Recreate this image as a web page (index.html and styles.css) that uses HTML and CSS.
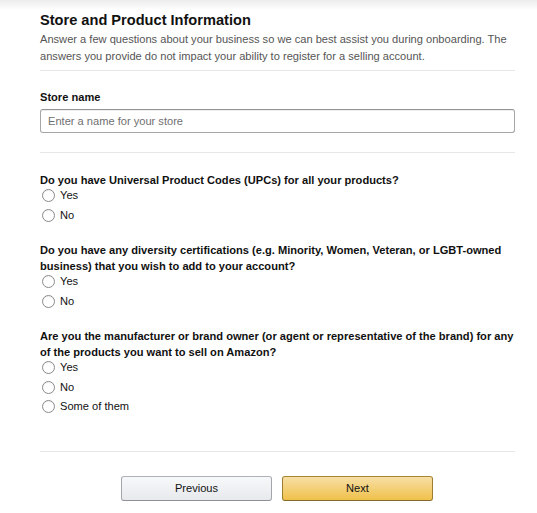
FILE: index.html
```html
<!DOCTYPE html>
<html lang="en">
<head>
<meta charset="utf-8">
<title>Store and Product Information</title>
<link rel="stylesheet" href="styles.css">
</head>
<body>
<div class="page">
  <section class="intro">
    <h1 class="title">Store and Product Information</h1>
    <p class="desc">Answer a few questions about your business so we can best assist you during onboarding. The answers you provide do not impact your ability to register for a selling account.</p>
  </section>
  <section class="store">
    <label class="label" for="store">Store name</label>
    <input id="store" class="input" type="text" placeholder="Enter a name for your store">
  </section>
  <section class="questions">
    <fieldset class="q">
      <legend class="qtext">Do you have Universal Product Codes (UPCs) for all your products?</legend>
      <label class="opt"><span class="radio"></span>Yes</label>
      <label class="opt"><span class="radio"></span>No</label>
    </fieldset>
    <fieldset class="q">
      <legend class="qtext">Do you have any diversity certifications (e.g. Minority, Women, Veteran, or LGBT-owned business) that you wish to add to your account?</legend>
      <label class="opt"><span class="radio"></span>Yes</label>
      <label class="opt"><span class="radio"></span>No</label>
    </fieldset>
    <fieldset class="q">
      <legend class="qtext">Are you the manufacturer or brand owner (or agent or representative of the brand) for any of the products you want to sell on Amazon?</legend>
      <label class="opt"><span class="radio"></span>Yes</label>
      <label class="opt"><span class="radio"></span>No</label>
      <label class="opt"><span class="radio"></span>Some of them</label>
    </fieldset>
  </section>
  <div class="actions">
    <button class="btn btn-prev" type="button">Previous</button>
    <button class="btn btn-next" type="button">Next</button>
  </div>
</div>
</body>
</html>
```
FILE: styles.css
```css
* { box-sizing: border-box; }
html, body { margin: 0; padding: 0; }
body {
  background: linear-gradient(to bottom, #ececec 0px, #ffffff 10px);
  font-family: "Liberation Sans", Arial, sans-serif;
  color: #111;
  width: 537px;
  height: 513px;
  overflow: hidden;
}
.page {
  padding: 9px 22px 0 40px;
}
.intro {
  padding-bottom: 5px;
  border-bottom: 1px solid #e7e7e7;
}
.title {
  margin: 0;
  font-size: 14.6px;
  font-weight: 700;
  line-height: 22px;
  color: #111;
}
.desc {
  margin: 0;
  font-size: 11.1px;
  line-height: 17px;
  color: #555;
}
.store {
  padding: 18px 0 19px;
  border-bottom: 1px solid #e7e7e7;
}
.label {
  display: block;
  font-size: 11.1px;
  font-weight: 700;
  line-height: 16px;
  margin-bottom: 4px;
}
.input {
  display: block;
  width: 100%;
  height: 24px;
  border: 1px solid #a6a6a6;
  border-top-color: #949494;
  border-radius: 3px;
  box-shadow: 0 1px 0 rgba(0,0,0,.07) inset;
  padding: 0 7px;
  font-family: inherit;
  font-size: 11.1px;
  color: #111;
}
.input::placeholder { color: #6f6f6f; }
.questions {
  padding: 19px 0 34px;
  border-bottom: 1px solid #e7e7e7;
}
.q {
  margin: 0 0 17px;
  padding: 0;
  border: 0;
  display: flex;
  flex-direction: column;
  min-width: 0;
}
.q:last-child { margin-bottom: 0; }
.qtext {
  padding: 0;
  font-size: 11.1px;
  font-weight: 700;
  line-height: 16px;
}
.opt {
  display: flex;
  align-items: center;
  gap: 5px;
  font-size: 11.1px;
  line-height: 19.5px;
  color: #111;
  padding-left: 2px;
}
.qtext + .opt { margin-top: -2px; }
.radio {
  width: 13px;
  height: 13px;
  border: 1px solid #8a8a8a;
  border-radius: 50%;
  background: #fff;
  box-shadow: 0 1px 1px rgba(0,0,0,.06) inset;
}
.actions {
  display: flex;
  justify-content: center;
  gap: 10px;
  padding-top: 24px;
  padding-right: 1px;
}
.btn {
  width: 151px;
  height: 25px;
  border-radius: 3px;
  font-family: inherit;
  font-size: 11.1px;
  color: #111;
  cursor: pointer;
}
.btn-prev {
  border: 1px solid #adb1b8;
  border-color: #adb1b8 #a2a6ac #8d9096;
  background: linear-gradient(to bottom, #f7f8fa, #e7e9ec);
}
.btn-next {
  border: 1px solid #a88734;
  border-color: #a88734 #9c7e31 #846a29;
  background: linear-gradient(to bottom, #f7dfa5, #f0c14b);
}
```
